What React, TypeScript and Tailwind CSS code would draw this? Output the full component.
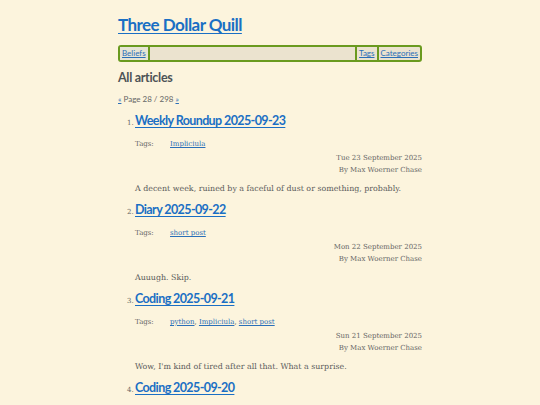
const items = [
  {
    n: 1,
    title: "Weekly Roundup 2025-09-23",
    tags: ["Impliciula"],
    date: "Tue 23 September 2025",
    summary: "A decent week, ruined by a faceful of dust or something, probably.",
  },
  {
    n: 2,
    title: "Diary 2025-09-22",
    tags: ["short post"],
    date: "Mon 22 September 2025",
    summary: "Auuugh. Skip.",
  },
  {
    n: 3,
    title: "Coding 2025-09-21",
    tags: ["python", "Impliciula", "short post"],
    date: "Sun 21 September 2025",
    summary: "Wow, I'm kind of tired after all that. What a surprise.",
  },
  {
    n: 4,
    title: "Coding 2025-09-20",
    tags: ["python"],
    date: "Sat 20 September 2025",
    summary: "More stuff.",
  },
];

const sans = "font-['Lato','Noto_Sans',sans-serif]";
const serif = "font-['DejaVu_Serif','Liberation_Serif',serif]";

export default function App() {
  return (
    <div className="h-[405px] overflow-hidden bg-[#fcf4dd] text-[#5a5a5a]">
      <div className="mx-auto w-[304px] pt-[14px]">
        <h1 className={`${sans} text-[17px] font-bold leading-[22px] tracking-[-0.55px]`}>
          <a href="#" className="text-[#1a6fc4] underline decoration-1 underline-offset-2">
            Three Dollar Quill
          </a>
        </h1>
        <nav
          className={`${sans} mt-[9px] flex h-[17px] items-stretch rounded-[3px] border-2 border-[#6a9a1f] bg-[#ebe3cf] text-[8px] leading-[13px]`}
        >
          <a href="#" className="border-r-2 border-[#6a9a1f] bg-[#e6e4d4] px-[2px] text-[#2a6fb8] underline">
            Beliefs
          </a>
          <div className="flex-1" />
          <a href="#" className="border-l-2 border-[#6a9a1f] px-[2px] text-[#2a6fb8] underline">
            Tags
          </a>
          <a href="#" className="border-l-2 border-[#6a9a1f] px-[2px] text-[#2a6fb8] underline">
            Categories
          </a>
        </nav>
        <h2 className={`${sans} mt-[8px] text-[12.5px] font-bold leading-[16px] tracking-[-0.3px] text-[#4d5356]`}>
          All articles
        </h2>
        <p className={`${sans} mt-[8px] text-[8px] leading-[10px] text-[#666]`}>
          <a href="#" className="text-[#2a6fb8] underline">«</a> Page 28 / 298{" "}
          <a href="#" className="text-[#2a6fb8] underline">»</a>
        </p>
        <ol className="mt-[8px] pl-[17px]">
          {items.map((it) => (
            <li key={it.n} className="h-[89px]">
              <div className="flex items-baseline">
                <span className={`${serif} w-[7px] -ml-[8px] mr-[1px] text-[7px] text-[#666]`}>{it.n}.</span>
                <a
                  href="#"
                  className={`${sans} text-[12.5px] font-bold leading-[18px] tracking-[-0.6px] text-[#1a6fc4] underline decoration-1 underline-offset-2`}
                >
                  {it.title}
                </a>
              </div>
              <div className={`${serif} mt-[9px] flex text-[7px] leading-[10px]`}>
                <span className="w-[35px] text-[#666]">Tags:</span>
                <span>
                  {it.tags.map((t, i) => (
                    <span key={t}>
                      <a href="#" className="text-[#2a6fb8] underline">
                        {t}
                      </a>
                      {i < it.tags.length - 1 ? ", " : ""}
                    </span>
                  ))}
                </span>
              </div>
              <div className={`${serif} mt-[3px] text-right text-[7px] leading-[12px] text-[#666]`}>
                <div>{it.date}</div>
                <div>By Max Woerner Chase</div>
              </div>
              <p className={`${serif} mt-[7px] text-[7.9px] leading-[11px] text-[#5a5a5a]`}>{it.summary}</p>
            </li>
          ))}
        </ol>
      </div>
    </div>
  );
}
